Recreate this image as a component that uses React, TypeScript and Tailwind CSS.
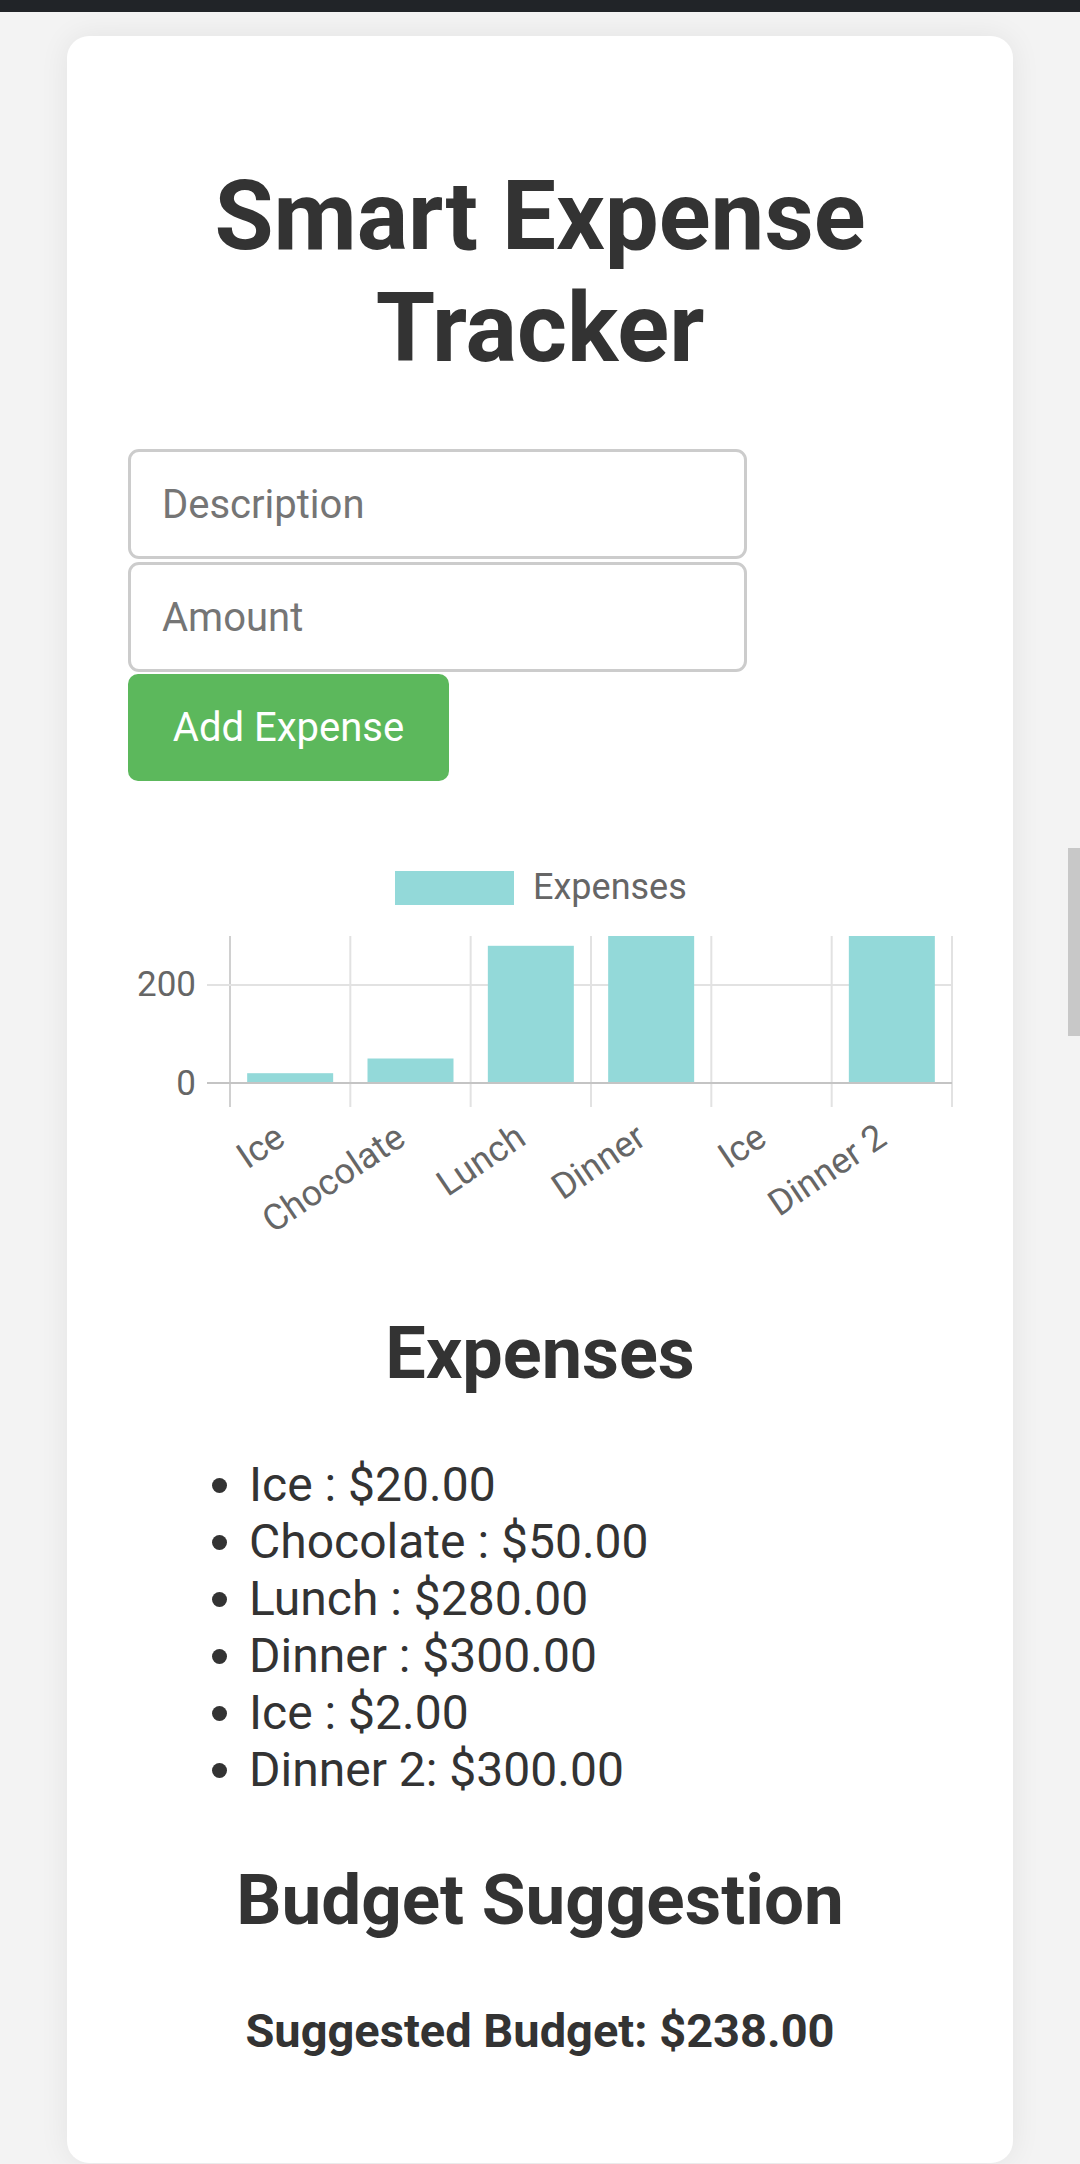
import { useState } from "react";

type Expense = { description: string; amount: number };

const initialExpenses: Expense[] = [
  { description: "Ice ", amount: 20 },
  { description: "Chocolate ", amount: 50 },
  { description: "Lunch ", amount: 280 },
  { description: "Dinner ", amount: 300 },
  { description: "Ice ", amount: 2 },
  { description: "Dinner 2", amount: 300 },
];

// chart geometry, in px of the svg
const W = 824;
const H = 420;
const PLOT_L = 102;
const PLOT_R = 824;
const PLOT_T = 97;
const PLOT_B = 244;
const MAX = 300;

const ExpenseChart = ({ data }: { data: Expense[] }) => {
  const step = (PLOT_R - PLOT_L) / data.length;
  const y = (v: number) => PLOT_B - ((PLOT_B - PLOT_T) * Math.min(v, MAX)) / MAX;

  return (
    <svg width={W} height={H} viewBox={`0 0 ${W} ${H}`} className="block overflow-visible">
      {/* legend */}
      <rect x={267} y={32} width={119} height={34} fill="#93d9d9" />
      <text x={405} y={60} fontSize={36} fill="#666" fontFamily="Roboto, sans-serif">
        Expenses
      </text>

      {/* vertical grid */}
      {Array.from({ length: data.length + 1 }).map((_, i) => (
        <line
          key={i}
          x1={PLOT_L + i * step}
          x2={PLOT_L + i * step}
          y1={PLOT_T}
          y2={268}
          stroke={i === 0 ? "#d0d0d0" : "#e2e2e2"}
          strokeWidth={2}
        />
      ))}

      {/* horizontal grid */}
      <line x1={79} x2={PLOT_R} y1={y(200)} y2={y(200)} stroke="#e2e2e2" strokeWidth={2} />

      {/* bars */}
      {data.map((d, i) => {
        const cx = PLOT_L + step * (i + 0.5);
        const top = y(d.amount);
        return (
          <rect key={i} x={cx - 43} y={top} width={86} height={Math.max(PLOT_B - top, 1)} fill="#93d9d9" />
        );
      })}

      {/* zero line */}
      <line x1={79} x2={PLOT_R} y1={PLOT_B} y2={PLOT_B} stroke="#c4c4c4" strokeWidth={2} />

      {/* y labels */}
      <text x={68} y={y(200) + 11} fontSize={35} fill="#666" textAnchor="end" fontFamily="Roboto, sans-serif">
        200
      </text>
      <text x={68} y={PLOT_B + 12} fontSize={35} fill="#666" textAnchor="end" fontFamily="Roboto, sans-serif">
        0
      </text>

      {/* x labels */}
      {data.map((d, i) => {
        const cx = PLOT_L + step * (i + 0.5);
        return (
          <text
            key={i}
            x={0}
            y={0}
            fontSize={36}
            fill="#666"
            textAnchor="end"
            fontFamily="Roboto, sans-serif"
            transform={`translate(${cx - 3} 304) rotate(-34)`}
          >
            {d.description.trim()}
          </text>
        );
      })}
    </svg>
  );
};

export default function App() {
  const [expenses] = useState<Expense[]>(initialExpenses);
  const total = expenses.reduce((s, e) => s + e.amount, 0);
  const suggested = total / 4;

  return (
    <div className="relative min-h-screen bg-[#f3f3f3] font-['Roboto',sans-serif] text-[#333]">
      <div className="h-[12px] bg-[#212428]" />

      <div className="px-[67px] pt-[24px] pb-[4px]">
        <div className="rounded-[22px] bg-white px-[61px] pt-[124px] pb-[104px] shadow-[0_0_30px_rgba(0,0,0,0.07)]">
          <h1 className="text-center text-[96px] leading-[112px] font-bold">Smart Expense Tracker</h1>

          <div className="mt-[65px] flex w-[619px] flex-col gap-[3px]">
            <input
              placeholder="Description"
              className="h-[110px] rounded-[11px] border-[3px] border-[#cccccc] px-[31px] text-[40px] placeholder:text-[#757575] outline-none"
            />
            <input
              placeholder="Amount"
              className="h-[110px] rounded-[11px] border-[3px] border-[#cccccc] px-[31px] text-[40px] placeholder:text-[#757575] outline-none"
            />
          </div>
          <button className="mt-[2px] flex h-[107px] w-[321px] items-center justify-center rounded-[10px] bg-[#5cb85c] text-[40px] text-white">
            Add Expense
          </button>

          <div className="mt-[58px]">
            <ExpenseChart data={expenses} />
          </div>

          <h2 className="mt-[50px] text-center text-[72px] leading-[89px] font-bold">Expenses</h2>
          <ul className="mt-[58px] list-disc pl-[121px] text-[48px] leading-[57px]">
            {expenses.map((e, i) => (
              <li key={i}>
                {e.description}: ${e.amount.toFixed(2)}
              </li>
            ))}
          </ul>

          <h2 className="mt-[57px] text-center text-[71px] leading-[89px] font-bold">Budget Suggestion</h2>
          <p className="mt-[58px] text-center text-[47px] leading-[57px] font-bold">
            Suggested Budget: ${suggested.toFixed(2)}
          </p>
        </div>
      </div>

      {/* scroll indicator */}
      <div className="absolute right-0 top-[848px] h-[188px] w-[12px] bg-[#c8c8c8]" />
    </div>
  );
}
